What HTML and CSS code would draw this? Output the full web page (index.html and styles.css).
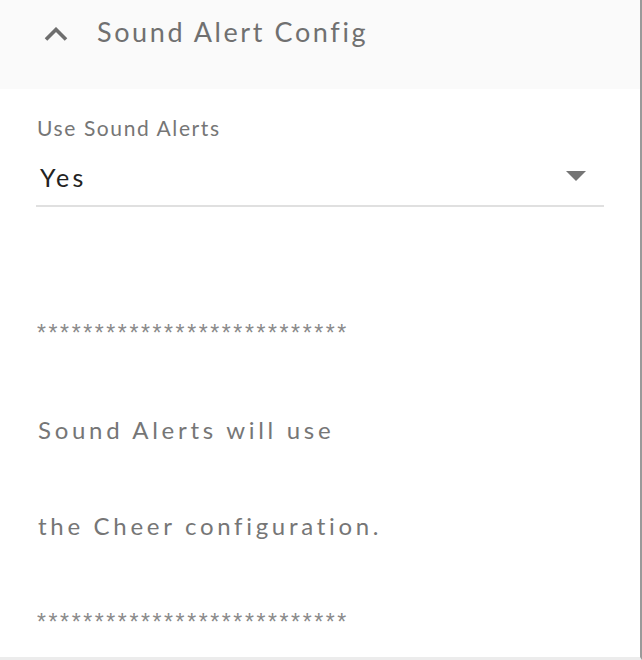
FILE: index.html
```html
<!DOCTYPE html>
<html>
<head>
<meta charset="utf-8">
<link rel="stylesheet" href="styles.css">
</head>
<body>
<div class="panel">
  <div class="panel-header">
    <svg class="chevron" width="24" height="14" viewBox="0 0 24 14"><path d="M2 12.5 L12 2.5 L22 12.5" fill="none" stroke="#6e6e6e" stroke-width="3.6"/></svg>
    <span class="panel-title">Sound Alert Config</span>
  </div>
  <div class="panel-body">
    <div class="field">
      <label class="field-label">Use Sound Alerts</label>
      <div class="select">
        <span class="select-value">Yes</span>
        <svg class="caret" width="20" height="10" viewBox="0 0 20 10"><path d="M0 0 L20 0 L10 10 Z" fill="#757575"/></svg>
      </div>
    </div>
    <div class="note">
      <p class="stars stars-top">***************************</p>
      <p class="msg msg-first">Sound Alerts will use</p>
      <p class="msg msg-second">the Cheer configuration.</p>
      <p class="stars stars-bottom">***************************</p>
    </div>
  </div>
</div>
</body>
</html>
```

FILE: styles.css
```css
html, body {
  margin: 0;
  padding: 0;
  background: #fff;
}
.panel {
  width: 640px;
  height: 657px;
  border-right: 2px solid #9a9a9a;
  border-bottom: 3px solid #ececec;
  background: #fff;
  font-family: Lato, "Open Sans", sans-serif;
}
.panel-header {
  height: 89px;
  background: #fafafa;
  display: flex;
  align-items: flex-start;
  padding: 18px 0 0 44px;
  box-sizing: border-box;
}
.chevron {
  display: block;
  margin-top: 9px;
  margin-right: 29px;
}
.panel-title {
  font-size: 27px;
  line-height: 1;
  color: #707070;
  letter-spacing: 2.6px;
}
.panel-body {
  padding: 0 36px;
}
.field {
  padding-top: 28px;
}
.field-label {
  display: block;
  font-size: 21px;
  line-height: 1;
  letter-spacing: 1.6px;
  color: #767676;
  padding-left: 1px;
}
.select {
  display: flex;
  align-items: flex-start;
  justify-content: space-between;
  margin-top: 27px;
  padding: 0 18px 15px 4px;
  border-bottom: 2px solid #e0e0e0;
  width: 568px;
  box-sizing: border-box;
}
.select-value {
  font-size: 25px;
  line-height: 1;
  color: #222;
  letter-spacing: 3.2px;
}
.caret {
  display: block;
  margin-top: 6px;
}
.note {
  padding-left: 1px;
}
.stars,
.msg {
  margin: 0;
  line-height: 1;
}
.stars {
  font-family: "Liberation Sans", Arial, sans-serif;
  font-size: 23px;
  color: #8a8a8a;
  letter-spacing: 2.6px;
}
.msg {
  padding-left: 1px;
  font-size: 24px;
  color: #767676;
  letter-spacing: 3.7px;
}
.note .stars-top {
  margin-top: 115px;
}
.note .msg-first {
  margin-top: 73px;
}
.note .msg-second {
  margin-top: 72px;
}
.note .stars-bottom {
  margin-top: 73px;
}
```
